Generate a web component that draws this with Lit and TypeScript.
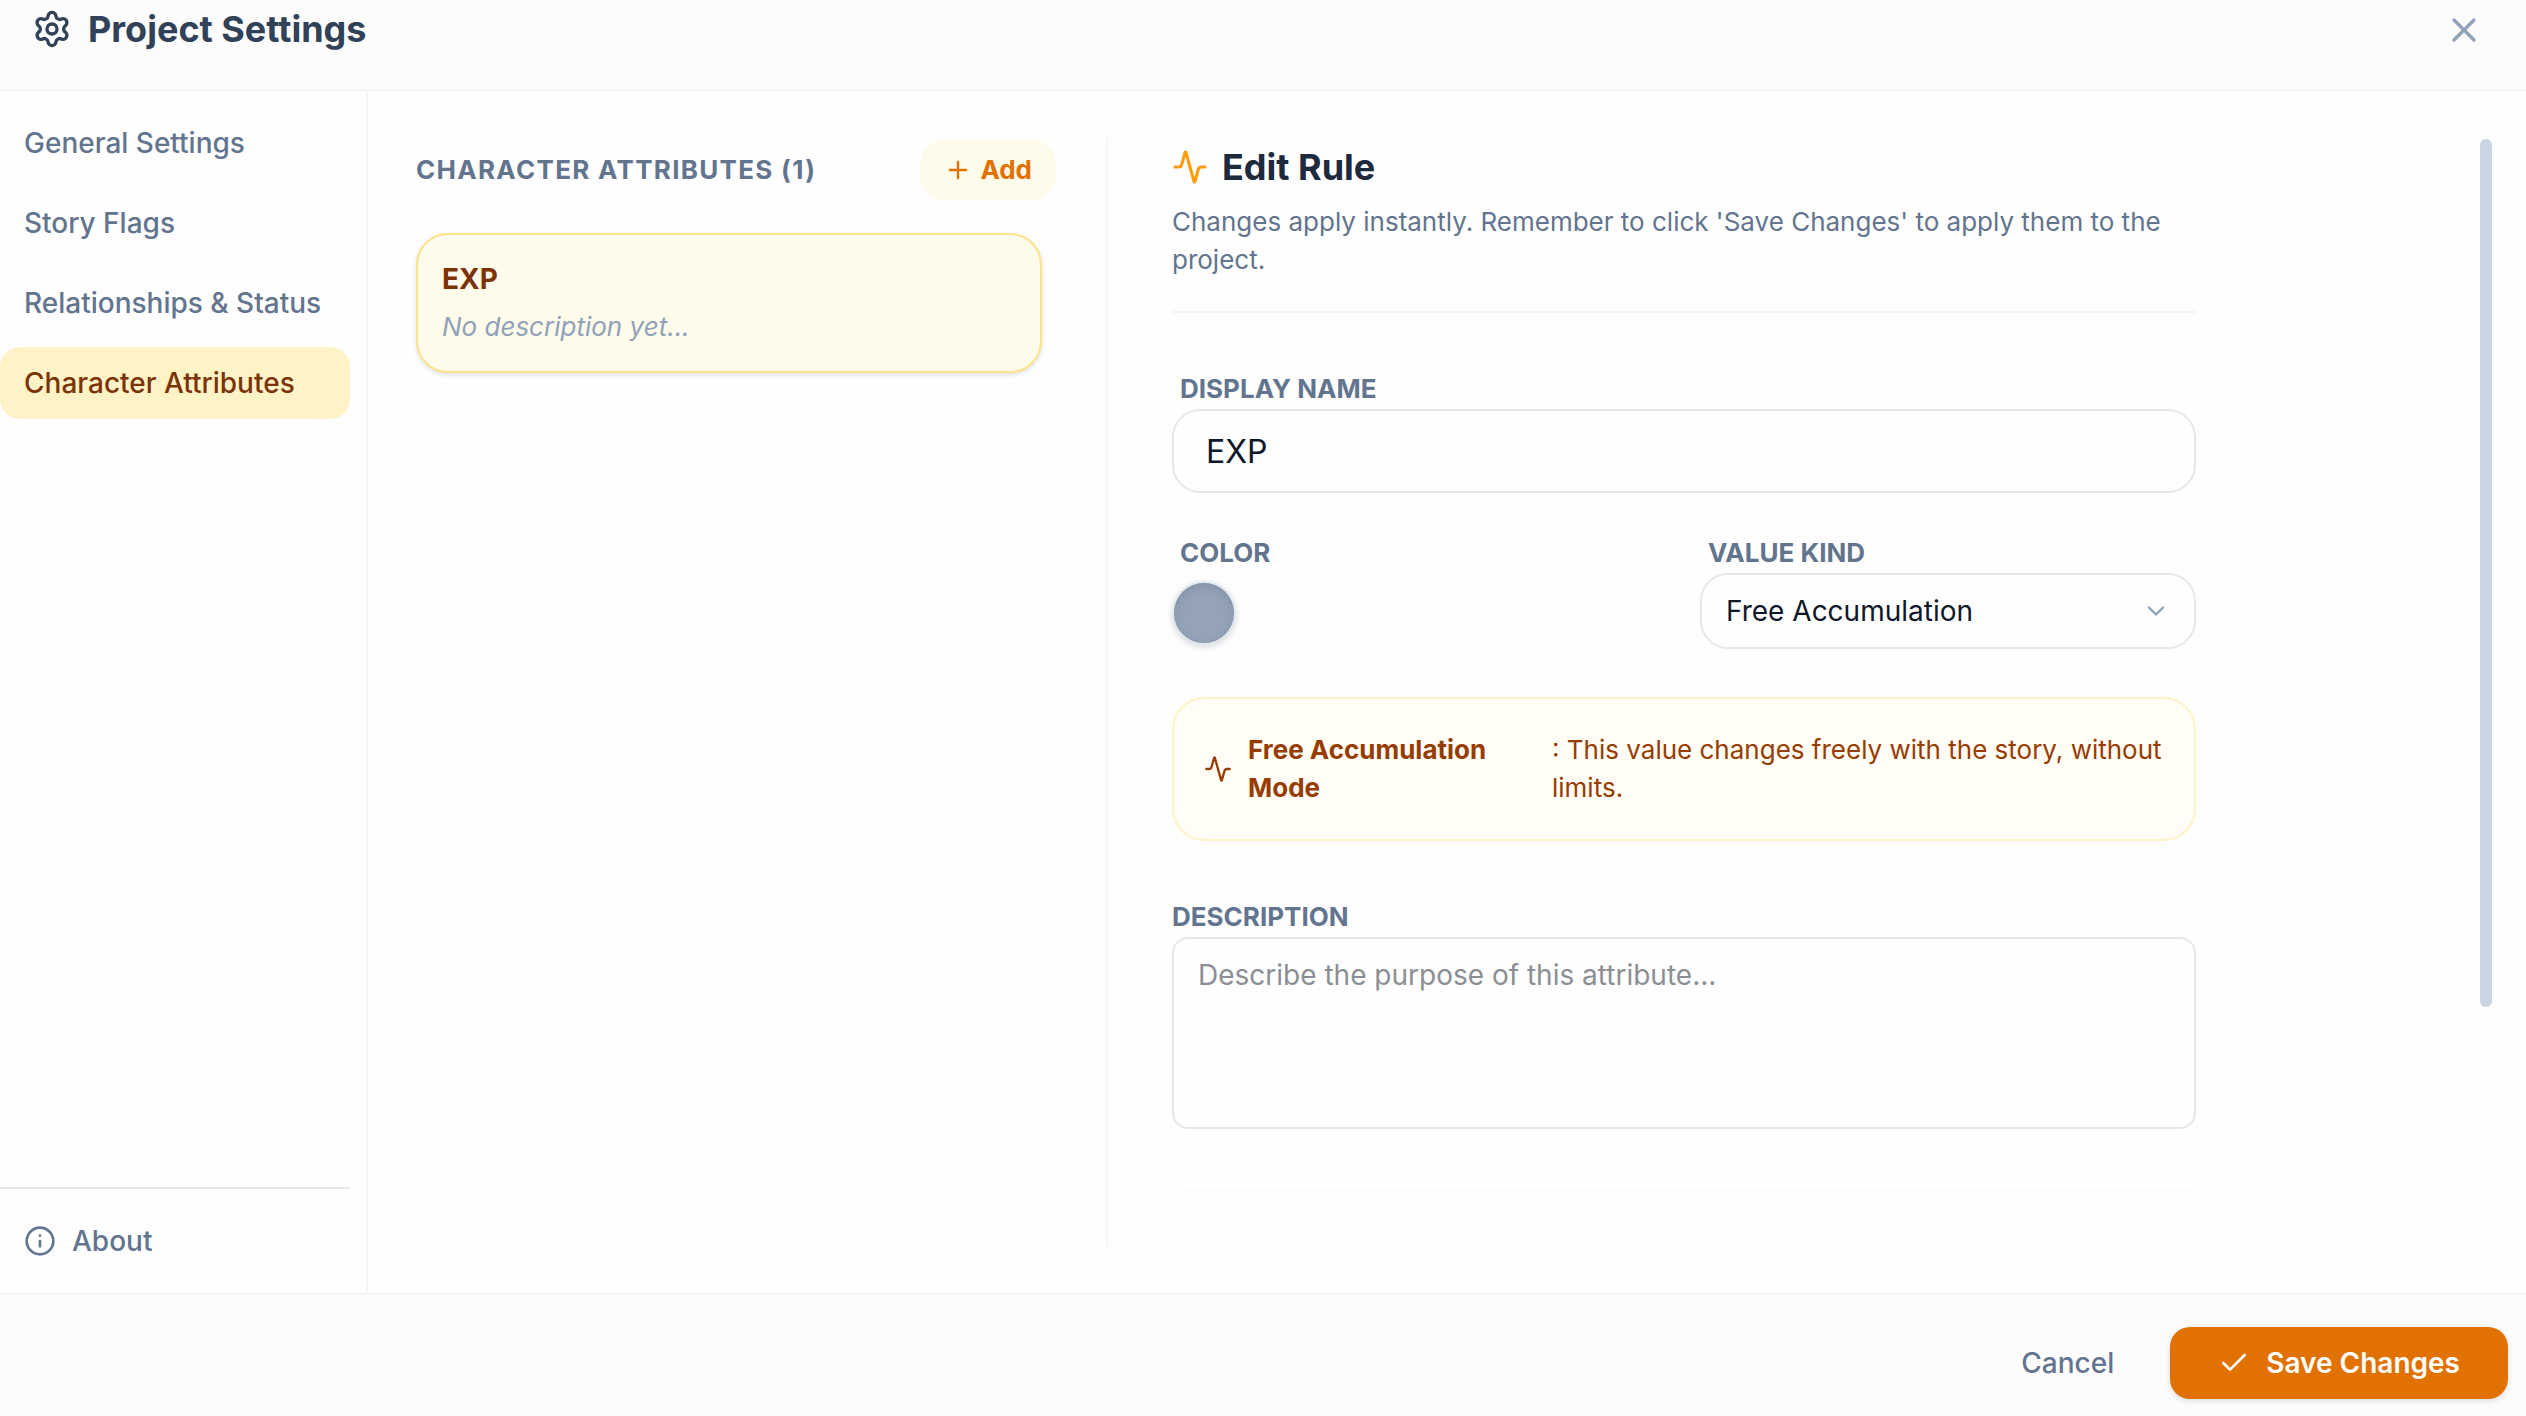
import { LitElement, html, css, svg } from "lit";
import { customElement, state } from "lit/decorators.js";

const icons = {
  gear: svg`<path d="M9.671 4.136a2.34 2.34 0 0 1 4.659 0 2.34 2.34 0 0 0 3.319 1.915 2.34 2.34 0 0 1 2.33 4.033 2.34 2.34 0 0 0 0 3.831 2.34 2.34 0 0 1-2.33 4.033 2.34 2.34 0 0 0-3.319 1.915 2.34 2.34 0 0 1-4.659 0 2.34 2.34 0 0 0-3.32-1.915 2.34 2.34 0 0 1-2.33-4.033 2.34 2.34 0 0 0 0-3.831A2.34 2.34 0 0 1 6.35 6.051a2.34 2.34 0 0 0 3.319-1.915"/><circle cx="12" cy="12" r="3"/>`,
  close: svg`<path d="M18 6 6 18M6 6l12 12"/>`,
  plus: svg`<path d="M5 12h14M12 5v14"/>`,
  pulse: svg`<path d="M22 12h-2.48a2 2 0 0 0-1.93 1.46l-2.35 8.36a.25.25 0 0 1-.48 0L9.24 2.18a.25.25 0 0 0-.48 0l-2.35 8.36A2 2 0 0 1 4.49 12H2"/>`,
  info: svg`<circle cx="12" cy="12" r="10"/><path d="M12 16v-4M12 8h.01"/>`,
  check: svg`<path d="M20 6 9 17l-5-5"/>`,
  chevron: svg`<path d="m6 9 6 6 6-6"/>`,
};

const icon = (name: keyof typeof icons, cls: string) =>
  html`<svg class="icon ${cls}" viewBox="0 0 24 24" aria-hidden="true">${icons[name]}</svg>`;

@customElement("app-root")
export class AppRoot extends LitElement {
  static styles = css`
    :host {
      display: flex;
      flex-direction: column;
      min-height: 100vh;
      background: #fefefe;
      color: #62748e;
      font: 400 28px/40px Inter, "Liberation Sans", sans-serif;
    }
    * { box-sizing: border-box; }
    h1, h2, h3, p { margin: 0; font: inherit; }
    button, input, select, textarea { font: inherit; color: inherit; margin: 0; }
    button { border: 0; background: none; padding: 0; cursor: pointer; }
    .icon {
      flex: none;
      fill: none;
      stroke: currentColor;
      stroke-width: 2;
      stroke-linecap: round;
      stroke-linejoin: round;
    }
    .s28 { width: 28px; height: 28px; }
    .s32 { width: 32px; height: 32px; }
    .s36 { width: 36px; height: 36px; }
    .s40 { width: 40px; height: 40px; }

    .header {
      display: flex;
      align-items: flex-start;
      justify-content: space-between;
      height: 91px;
      padding: 8px 42px 0 32px;
      background: #fcfcfd;
      border-bottom: 2px solid #f3f5f7;
    }
    .title {
      display: flex;
      align-items: center;
      gap: 16px;
      color: #314158;
      font-size: 36px;
      line-height: 42px;
      font-weight: 700;
    }
    .close { display: flex; padding: 2px 0; color: #90a1b9; }

    .body { flex: 1; display: flex; min-height: 0; }
    .sidebar {
      display: flex;
      flex-direction: column;
      flex: none;
      width: 368px;
      padding: 16px 16px 16px 0;
      border-right: 2px solid #f3f6f8;
    }
    .nav { display: flex; flex-direction: column; gap: 8px; }
    .tab {
      height: 72px;
      padding: 0 24px;
      border-radius: 20px;
      text-align: left;
      font-weight: 500;
      white-space: nowrap;
    }
    .tab.active { background: #fef3c6; color: #7b3306; }
    .foot { margin-top: auto; padding-top: 16px; border-top: 2px solid #e5e8eb; }
    .about { display: flex; align-items: center; gap: 16px; width: 100%; }

    .content { flex: 1; display: flex; min-width: 0; padding: 48px 34px 48px 48px; }
    .list { flex: none; width: 692px; padding-right: 50px; border-right: 2px solid #f6f7f9; }
    .list-head {
      display: flex;
      align-items: center;
      justify-content: space-between;
      height: 62px;
      margin-bottom: 32px;
    }
    .caps {
      font-size: 26px;
      line-height: 36px;
      font-weight: 700;
      text-transform: uppercase;
      letter-spacing: 0.05em;
    }
    .add {
      display: flex;
      align-items: center;
      gap: 8px;
      height: 60px;
      padding: 0 24px;
      border-radius: 24px;
      background: #fffbeb;
      color: #e17100;
      font-size: 26px;
      font-weight: 700;
    }
    .card {
      display: block;
      width: calc(100% - 14px);
      padding: 24px;
      border: 2px solid #fbe38b;
      border-radius: 32px;
      background: #fffbeb;
      text-align: left;
      box-shadow: 0 2px 5px rgba(0, 0, 0, 0.12);
    }
    .card-name { display: block; color: #7b3306; font-weight: 700; }
    .card-note { display: block; margin-top: 8px; color: #90a1b9; font-size: 26px; font-style: italic; }

    .scroller { flex: 1; display: flex; justify-content: space-between; min-width: 0; padding-left: 64px; }
    .form { width: 1024px; max-width: calc(100% - 32px); }
    .thumb { flex: none; width: 12px; height: 868px; border-radius: 6px; background: #cad5e2; }
    .form-head { padding-bottom: 32px; border-bottom: 2px solid #f3f4f6; font-size: 26px; line-height: 38px; }
    .form-title {
      display: flex;
      align-items: center;
      gap: 14px;
      margin-bottom: 8px;
      color: #1d293d;
      font-size: 36px;
      line-height: 56px;
      font-weight: 700;
    }
    .amber { color: #fe9a00; }
    .label {
      display: block;
      padding: 0 8px;
      font-size: 26px;
      line-height: 40px;
      font-weight: 700;
      text-transform: uppercase;
    }
    .label.flush { padding: 0; }
    .box {
      display: block;
      width: 100%;
      border: 2px solid #e5e8eb;
      border-radius: 28px;
      background: #fefefe;
      color: #0f172b;
      outline: 0;
    }
    .name { height: 84px; padding: 0 32px; font-size: 32px; }
    .row { display: grid; grid-template-columns: 1fr 496px; gap: 32px; }
    .group { display: flex; flex-direction: column; }
    .g1 { margin-top: 56px; }
    .g2 { margin-top: 40px; }
    .swatch {
      appearance: none;
      width: 64px;
      height: 64px;
      margin: 8px 0 0;
      padding: 0;
      border: 2px solid #e2e8f0;
      border-radius: 50%;
      background: #94a3b8;
      box-shadow: 0 2px 6px rgba(15, 23, 43, 0.16);
      cursor: pointer;
    }
    .swatch::-webkit-color-swatch-wrapper { padding: 0; }
    .swatch::-webkit-color-swatch {
      border: 0;
      border-radius: 50%;
      box-shadow: inset 0 4px 8px rgba(70, 85, 110, 0.2);
    }
    .select { display: grid; align-items: center; }
    .select > * { grid-area: 1 / 1; }
    .kind { appearance: none; height: 76px; padding: 0 24px; font-size: 28px; }
    .chev { justify-self: end; margin-right: 26px; color: #90a1b9; pointer-events: none; }
    .hint {
      display: flex;
      align-items: center;
      gap: 16px;
      margin-top: 48px;
      padding: 32px 30px;
      border: 2px solid #fef3c6;
      border-radius: 32px;
      background: #fffdf5;
      color: #973c00;
      font-size: 26px;
      line-height: 38px;
    }
    .hint strong { flex: none; width: 288px; font-weight: 700; }
    .desc {
      height: 192px;
      padding: 16px 24px;
      border-radius: 16px;
      resize: none;
      font-size: 28px;
    }
    .desc::placeholder { color: #8b8f94; opacity: 1; }
    .rule { height: 2px; margin: 60px 4px 0 12px; background: #fafafb; }

    .footer {
      display: flex;
      align-items: center;
      justify-content: flex-end;
      gap: 56px;
      height: 123px;
      padding: 14px 18px 0 0;
      background: #fcfcfd;
      border-top: 2px solid #f3f5f7;
    }
    .cancel { font-weight: 500; }
    .save {
      display: flex;
      align-items: center;
      gap: 16px;
      height: 72px;
      padding: 0 48px;
      border-radius: 20px;
      background: #e17100;
      color: #fff;
      font-weight: 600;
      box-shadow: 0 2px 6px rgba(0, 0, 0, 0.12);
    }
  `;

  @state() private tab = "Character Attributes";
  private tabs = ["General Settings", "Story Flags", "Relationships & Status", "Character Attributes"];

  render() {
    return html`
      <header class="header">
        <h1 class="title">${icon("gear", "s40")}Project Settings</h1>
        <button class="close" aria-label="Close">${icon("close", "s40")}</button>
      </header>
      <div class="body">
        <aside class="sidebar">
          <nav class="nav">
            ${this.tabs.map(
              (t) => html`<button class="tab ${t === this.tab ? "active" : ""}" @click=${() => (this.tab = t)}>${t}</button>`
            )}
          </nav>
          <div class="foot">
            <button class="tab about">${icon("info", "s32")}About</button>
          </div>
        </aside>
        <main class="content">
          <section class="list">
            <div class="list-head">
              <h3 class="caps">Character Attributes (1)</h3>
              <button class="add">${icon("plus", "s28")}Add</button>
            </div>
            <button class="card">
              <span class="card-name">EXP</span>
              <span class="card-note">No description yet...</span>
            </button>
          </section>
          <section class="scroller">
            <div class="form">
              <div class="form-head">
                <h2 class="form-title">${icon("pulse", "s36 amber")}Edit Rule</h2>
                <p>Changes apply instantly. Remember to click 'Save Changes' to apply them to the project.</p>
              </div>
              <div class="group g1">
                <label class="label" for="name">Display Name</label>
                <input class="box name" id="name" .value=${"EXP"} />
              </div>
              <div class="row g2">
                <div class="group">
                  <label class="label" for="color">Color</label>
                  <input class="swatch" id="color" type="color" .value=${"#94a3b8"} />
                </div>
                <div class="group">
                  <label class="label" for="kind">Value Kind</label>
                  <div class="select">
                    <select class="box kind" id="kind"><option>Free Accumulation</option></select>
                    ${icon("chevron", "s28 chev")}
                  </div>
                </div>
              </div>
              <div class="hint">
                ${icon("pulse", "s28")}
                <strong>Free Accumulation Mode</strong>
                <span>: This value changes freely with the story, without limits.</span>
              </div>
              <div class="group g1">
                <label class="label flush" for="desc">Description</label>
                <textarea class="box desc" id="desc" placeholder="Describe the purpose of this attribute..."></textarea>
              </div>
              <div class="rule"></div>
            </div>
            <div class="thumb"></div>
          </section>
        </main>
      </div>
      <footer class="footer">
        <button class="cancel">Cancel</button>
        <button class="save">${icon("check", "s32")}Save Changes</button>
      </footer>
    `;
  }
}
